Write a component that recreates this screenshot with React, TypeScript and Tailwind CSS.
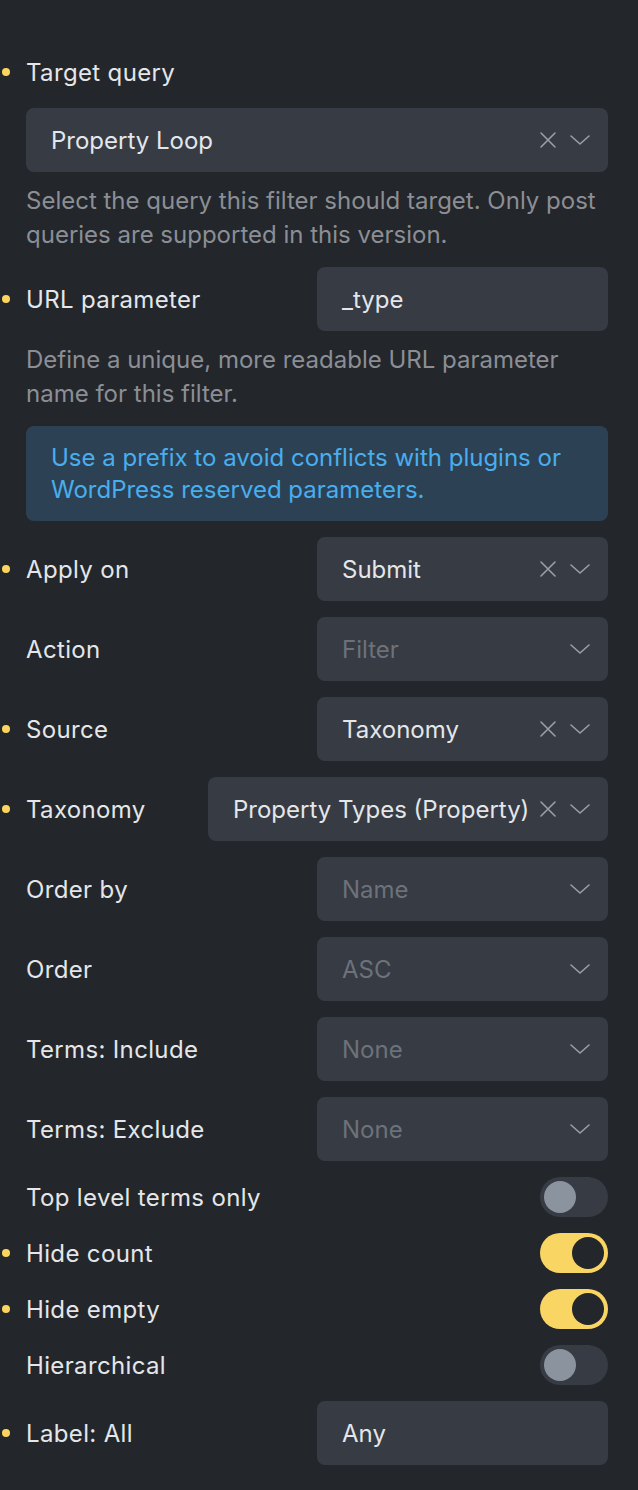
import React from "react";

const FONT = { fontFamily: "Inter, 'Noto Sans', sans-serif" };

function Dot({ on }: { on?: boolean }) {
  return on ? (
    <span className="absolute left-[2px] top-1/2 -mt-[4px] h-[8px] w-[8px] rounded-full bg-[#fcd55f]" />
  ) : null;
}

function XIcon() {
  return (
    <svg width="16" height="16" viewBox="0 0 16 16" fill="none" stroke="#9a9ea5" strokeWidth="1.6" strokeLinecap="round">
      <path d="M1 1L15 15M15 1L1 15" />
    </svg>
  );
}

function Chevron() {
  return (
    <svg width="20" height="10" viewBox="0 0 20 10" fill="none" stroke="#9a9ea5" strokeWidth="1.6" strokeLinecap="round" strokeLinejoin="round">
      <path d="M1 1L10 9L19 1" />
    </svg>
  );
}

function Select({
  value,
  placeholder,
  clear,
  className = "",
}: {
  value?: string;
  placeholder?: string;
  clear?: boolean;
  className?: string;
}) {
  return (
    <div className={`flex h-[64px] items-center rounded-[8px] bg-[#363b44] pl-[25px] pr-[18px] ${className}`}>
      <span className={`flex-1 truncate pt-[2px] ${value ? "text-[#e4e6e9]" : "text-[#6d727a]"}`}>{value ?? placeholder}</span>
      <div className="flex items-center gap-[14px]">
        {clear && <XIcon />}
        <Chevron />
      </div>
    </div>
  );
}

function Label({ children }: { children: React.ReactNode }) {
  return <div className="flex-1 pl-[26px] pt-[2px] tracking-[0.35px] text-[#e4e6e9]">{children}</div>;
}

function Row({
  label,
  dot,
  children,
  wide,
}: {
  label: string;
  dot?: boolean;
  children: React.ReactNode;
  wide?: boolean;
}) {
  return (
    <div className="relative flex h-[64px] items-center">
      <Dot on={dot} />
      <Label>{label}</Label>
      <div className={wide ? "w-[400px]" : "w-[291px]"}>{children}</div>
    </div>
  );
}

function Toggle({ on }: { on?: boolean }) {
  return on ? (
    <div className="flex h-[40px] w-[68px] items-center justify-end rounded-full bg-[#f9d563] pr-[4px]">
      <div className="h-[32px] w-[32px] rounded-full bg-[#23262b]" />
    </div>
  ) : (
    <div className="flex h-[40px] w-[68px] items-center rounded-full bg-[#363b44] pl-[4px]">
      <div className="h-[32px] w-[32px] rounded-full bg-[#8b939e]" />
    </div>
  );
}

function ToggleRow({ label, dot, on }: { label: string; dot?: boolean; on?: boolean }) {
  return (
    <div className="relative flex h-[40px] items-center">
      <Dot on={dot} />
      <Label>{label}</Label>
      <Toggle on={on} />
    </div>
  );
}

function TextInput({ value }: { value: string }) {
  return (
    <div className="flex h-[64px] items-center rounded-[8px] bg-[#363b44] pl-[25px] pt-[2px] text-[#e4e6e9]">{value}</div>
  );
}

export default function App() {
  return (
    <div
      className="min-h-[1490px] w-[638px] bg-[#23262b] pr-[30px] pt-[52px] text-[24px] leading-[34px]"
      style={FONT}
    >
      <div className="flex flex-col gap-[16px]">
        <div className="relative flex h-[40px] items-center">
          <Dot on />
          <Label>Target query</Label>
        </div>
        <div className="pl-[26px]">
          <Select value="Property Loop" clear />
          <p className="-mb-[1px] mt-[12px] text-[#8b8f95]">
            Select the query this filter should target. Only post queries are supported in this version.
          </p>
        </div>
        <div>
          <Row label="URL parameter" dot>
            <TextInput value="_type" />
          </Row>
          <p className="-mb-[1px] mt-[12px] pl-[26px] text-[#8b8f95]">
            Define a unique, more readable URL parameter name for this filter.
          </p>
        </div>
        <div className="ml-[26px] rounded-[8px] bg-[#2c4254] px-[25px] pb-[15px] pt-[16px] leading-[32px] text-[#49aeee]">
          Use a prefix to avoid conflicts with plugins or WordPress reserved parameters.
        </div>
        <Row label="Apply on" dot>
          <Select value="Submit" clear />
        </Row>
        <Row label="Action">
          <Select placeholder="Filter" />
        </Row>
        <Row label="Source" dot>
          <Select value="Taxonomy" clear />
        </Row>
        <Row label="Taxonomy" dot wide>
          <Select value="Property Types (Property)" clear className="pl-[24px]" />
        </Row>
        <Row label="Order by">
          <Select placeholder="Name" />
        </Row>
        <Row label="Order">
          <Select placeholder="ASC" />
        </Row>
        <Row label="Terms: Include">
          <Select placeholder="None" />
        </Row>
        <Row label="Terms: Exclude">
          <Select placeholder="None" />
        </Row>
        <ToggleRow label="Top level terms only" />
        <ToggleRow label="Hide count" dot on />
        <ToggleRow label="Hide empty" dot on />
        <ToggleRow label="Hierarchical" />
        <Row label="Label: All" dot>
          <TextInput value="Any" />
        </Row>
      </div>
    </div>
  );
}
